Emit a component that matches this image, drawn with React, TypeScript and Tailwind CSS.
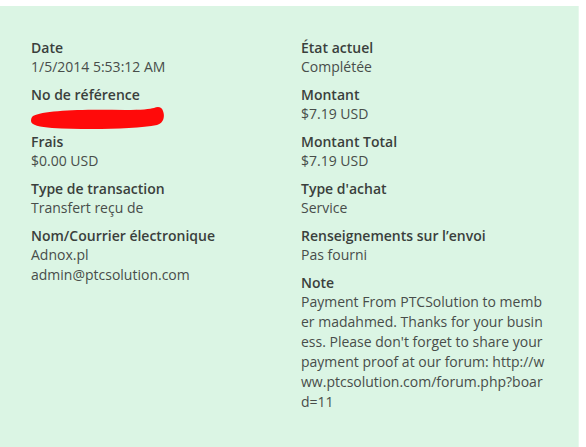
import React from 'react';

type Field = { label: string; values?: string[]; redacted?: boolean };

const LEFT: Field[] = [
  { label: 'Date', values: ['1/5/2014 5:53:12 AM'] },
  { label: 'No de référence', redacted: true },
  { label: 'Frais', values: ['$0.00 USD'] },
  { label: 'Type de transaction', values: ['Transfert reçu de'] },
  { label: 'Nom/Courrier électronique', values: ['Adnox.pl', 'admin@ptcsolution.com'] },
];

// the note is shown hard-wrapped, the way the source page cuts it
const RIGHT: Field[] = [
  { label: 'État actuel', values: ['Complétée'] },
  { label: 'Montant', values: ['$7.19 USD'] },
  { label: 'Montant Total', values: ['$7.19 USD'] },
  { label: "Type d'achat", values: ['Service'] },
  { label: "Renseignements sur l’envoi", values: ['Pas fourni'] },
  {
    label: 'Note',
    values: [
      'Payment From PTCSolution to memb',
      'er madahmed. Thanks for your busin',
      "ess. Please don't forget to share your",
      'payment proof at our forum: http://w',
      'ww.ptcsolution.com/forum.php?boar',
      'd=11',
    ],
  },
];

// red marker scribble over the reference number
const Scribble = () => (
  <svg width="136" height="24" viewBox="0 0 136 24" className="block">
    <path
      d="M3,10 C14,4 55,3 95,4 C112,4 120,3 124,2 C128,0 132,1 133,5 C135,10 134,17 127,19 C106,23 60,24 22,22 C10,21 1,19 1,15 C1,12 2,11 3,10 Z"
      fill="#ff0a0a"
    />
  </svg>
);

const Block = ({ field }: { field: Field }) => (
  <div className="mb-[8px]">
    <div className="font-semibold text-[#3a3f3c] leading-[19px]">{field.label}</div>
    {field.redacted ? (
      <div className="h-[20px] -ml-[1px] pt-[2px]">
        <Scribble />
      </div>
    ) : (
      field.values?.map((v, i) => (
        <div key={i} className="text-[#484d4a] leading-[20px] whitespace-nowrap">
          {v}
        </div>
      ))
    )}
  </div>
);

export default function App() {
  return (
    <div className="w-[586px] h-[447px] bg-white overflow-hidden" style={{ fontFamily: '"Open Sans", sans-serif' }}>
      <div className="mt-[6px] w-[579px] h-[441px] bg-[#dbf5e4] border-r border-[#e6f8ec] pt-[32px] pl-[31px] text-[14px]">
        <div className="flex">
          <div className="w-[270px] flex flex-col">
            {LEFT.map(f => (
              <Block key={f.label} field={f} />
            ))}
          </div>
          <div className="w-[250px] flex flex-col">
            {RIGHT.map(f => (
              <Block key={f.label} field={f} />
            ))}
          </div>
        </div>
      </div>
    </div>
  );
}
